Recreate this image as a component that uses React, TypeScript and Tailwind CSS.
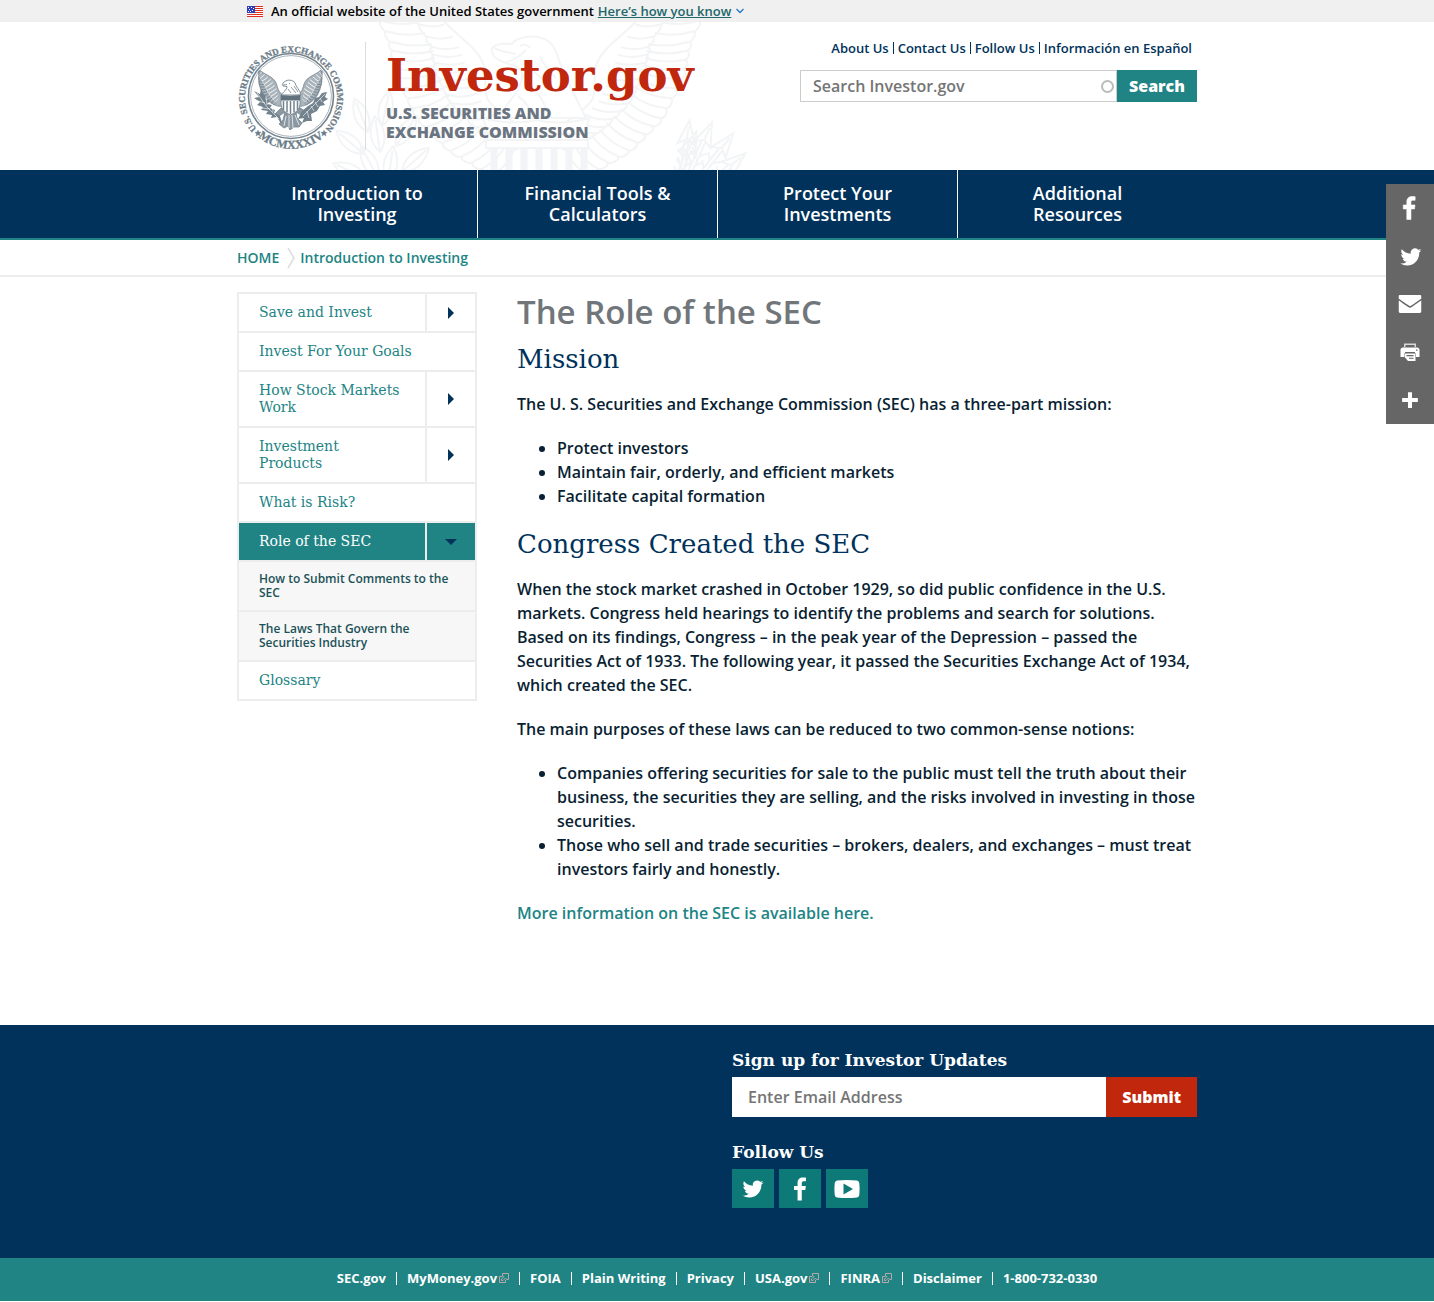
import type { ReactNode } from "react";

type Pt = [number, number];

/** Point on a poly-line of control points, t in 0..1. */
function along(points: Pt[], t: number): Pt {
  const s = t * (points.length - 1);
  const i = Math.min(Math.floor(s), points.length - 2);
  const f = s - i;
  return [
    points[i][0] + (points[i + 1][0] - points[i][0]) * f,
    points[i][1] + (points[i + 1][1] - points[i][1]) * f,
  ];
}

/** Rounded feathers running from a root curve to a tip curve. */
function feathers(root: Pt[], tip: Pt[], count: number, bend: number): string {
  let d = "";
  for (let i = 0; i < count; i++) {
    const a = along(root, i / count);
    const b = along(root, (i + 1) / count);
    const p = along(tip, i / count);
    const q = along(tip, (i + 1) / count);
    const dx = p[0] - a[0];
    const dy = p[1] - a[1];
    const len = Math.hypot(dx, dy) || 1;
    const ox = (-dy / len) * bend;
    const oy = (dx / len) * bend;
    const ex = (dx / len) * bend;
    const ey = (dy / len) * bend;
    d += `M${a[0]} ${a[1]}Q${(a[0] + p[0]) / 2 + ox} ${(a[1] + p[1]) / 2 + oy} ${p[0]} ${p[1]}`;
    d += `C${p[0] + ex} ${p[1] + ey} ${q[0] + ex} ${q[1] + ey} ${q[0]} ${q[1]}`;
    d += `Q${(b[0] + q[0]) / 2 + ox} ${(b[1] + q[1]) / 2 + oy} ${b[0]} ${b[1]}`;
  }
  return d;
}

const bigRoot: Pt[] = [[322, -22], [292, 22], [282, 50], [270, 78], [246, 102], [222, 118]];
const bigMid: Pt[] = [[345, -22], [318, 22], [312, 50], [298, 80], [270, 108], [236, 128]];
const bigTip: Pt[] = [[378, -22], [358, 20], [350, 56], [330, 96], [298, 128], [256, 152]];

const leaf = "M0 0C-9 -10 -9 -24 0 -36C9 -24 9 -10 0 0ZM0 -2V-32";
const leaves: [number, number, number][] = [
  [38, 110, -22], [52, 104, 12], [34, 132, -50], [66, 124, 34], [50, 130, -8],
  [36, 156, -66], [72, 150, 48], [48, 156, -28], [58, 160, 8],
];
const arrows: [number, number, number][] = [
  [360, 150, 24], [352, 152, 8], [370, 154, 38], [346, 160, 22], [374, 166, 50],
];

function HeaderWatermark() {
  return (
    <svg
      aria-hidden="true"
      viewBox="0 0 420 148"
      className="pointer-events-none absolute top-0 left-[93px] h-[148px] w-[420px] overflow-hidden"
      fill="none"
      stroke="#f3f4f6"
      strokeWidth="2"
    >
      {["", "matrix(-1 0 0 1 420 0)"].map((t) => (
        <g key={t} transform={t || undefined}>
          <path d={feathers(bigMid, bigTip, 20, 5)} />
          <path d={feathers(bigRoot, bigMid, 18, 4)} />
          <path d="M312 -8C300 10 272 24 266 44C262 58 268 66 262 78C256 88 240 96 226 108" />
        </g>
      ))}
      <path fill="#fff" d="M178 42C168 38 160 34 162 26C168 20 176 22 182 22C188 14 206 12 216 18C228 24 228 40 234 52C242 68 250 84 256 96H168C176 82 190 70 192 56C194 46 186 44 178 42Z" />
      <path d="M164 26C172 30 178 30 186 32M176 40C184 38 190 34 196 28M190 24C194 22 198 23 200 26" />
      <path d="M200 46C210 56 218 60 226 70M196 60C206 68 212 76 216 86M188 74C196 80 200 86 202 94M210 34C214 44 220 50 226 56" />
      <path fill="#fff" d="M156 122Q158 102 152 96Q182 104 206 98Q232 104 260 96Q254 104 258 122V126H156Z" />
      <path d="M157 112H257M157 118H257" />
      <path stroke="#f3f4f7" strokeWidth="7" d="M164 127V150M179 127V150M194 127V150M209 127V150M224 127V150M239 127V150M254 127V150" />
      {leaves.map(([x, y, r]) => (
        <path key={`${x}-${y}`} d={leaf} transform={`translate(${x} ${y}) rotate(${r})`} />
      ))}
      {arrows.map(([x, y, r]) => (
        <path
          key={`${x}-${y}`}
          transform={`translate(${x} ${y}) rotate(${r})`}
          d="M-2 0V-34L-9 -30L0 -54L9 -30L2 -34V0M0 -34V-48M-2 -8L-8 -14M2 -8L8 -14M-2 -18L-8 -24M2 -18L8 -24"
        />
      ))}
    </svg>
  );
}

const sealRoot: Pt[] = [[84, 29], [74, 37], [68, 47], [66, 58]];
const sealMid: Pt[] = [[87, 32], [81, 42], [76, 52], [69, 61]];
const sealTip: Pt[] = [[87, 28], [86, 42], [81, 54], [70, 64]];

function Seal() {
  return (
    <svg
      role="img"
      aria-label="Seal of the U.S. Securities and Exchange Commission"
      viewBox="0 0 108 108"
      className="size-[108px] shrink-0"
      fill="none"
      stroke="#73838e"
    >
      <defs>
        <path id="seal-top" d="M19 86A46 46 0 1 1 89 86" />
        <path id="seal-bottom" d="M14 88A52 52 0 0 0 94 88" />
      </defs>
      <circle cx="54" cy="54" r="42.5" strokeWidth="1.6" />
      <circle cx="54" cy="54" r="40.4" strokeWidth="0.6" />
      <g fill="#6b7c88" stroke="#6b7c88" strokeWidth="0.3" fontFamily="Liberation Serif, serif">
        <text textAnchor="middle" fontSize="9">
          <textPath href="#seal-top" startOffset="50%">U.S. SECURITIES AND EXCHANGE COMMISSION</textPath>
        </text>
        <text fontSize="12" textAnchor="middle">
          <textPath href="#seal-bottom" startOffset="50%">MCMXXXIV</textPath>
        </text>
        <path d="M21 88l.9 2.100 2.300.2-1.700 1.500.5 2.200-2-1.200-2 1.200.5-2.200-1.700-1.500 2.300-.2zM87 88l.9 2.100 2.300.2-1.700 1.500.5 2.200-2-1.200-2 1.200.5-2.200-1.700-1.500 2.300-.2z" />
      </g>
      <g transform="translate(4 3) scale(0.93)">
        {["", "matrix(-1 0 0 1 106 0)"].map((t) => (
          <g key={t} transform={t || undefined}>
            <path
              fill="#aab4bb"
              strokeWidth="0.8"
              d="M86 27C82 31 74 33 70 38C66 43 68 48 62 53L60 66C70 67 80 60 84 50C87 42 88 34 86 27Z"
            />
            <path strokeWidth="0.7" d={feathers(sealMid, sealTip, 12, 1)} />
            <path stroke="#fff" strokeWidth="0.6" d={feathers(sealRoot, sealMid, 9, 0.5)} />
          </g>
        ))}
      </g>
      <path fill="#fff" strokeWidth="0.9" d="M46 44C45 42 46 40 48 39.500C50 37.500 56 37.500 58 41C59 45 63 48 64 53H44C46 50 50 48 50 44.500Z" />
      <path strokeWidth="0.8" d="M46 43L50 42.500M52 41.500H53M51 47L54 51M54 45L59 51M57 44L61 50" />
      <path fill="#8b98a2" strokeWidth="0.8" d="M44 66L38 72L42 74L48 70L46 78L42 82L47 86L51 84L53 88L57 85L62 85L65 81L60 76L59 70L66 74L69 70L62 65Z" />
      <path stroke="#fff" strokeWidth="0.7" d="M49 74L47 84M52 73V86M55 73L56 86M58 73L62 83" />
      <path fill="#fff" strokeWidth="0.8" d="M44 53Q53 55 63 53V62Q63 69 53.500 73Q44 69 44 62Z" />
      <path fill="#5f717d" stroke="none" d="M44 53Q53 55 63 53V58.500H44Z" />
      <path strokeWidth="1.500" d="M46.500 59V68M50 59V70.500M53.500 59V72M57 59V70.500M60.500 59V68" />
      <path fill="#73838e" stroke="none" d="M17 49l6 3 1-5 3 6 3 1-2 3 5 2-3 3 5 1-2 3 5 2-1 3 6 3 2 7-2-1-3-5-6 1 1-3-6-1 2-3-7-1 2-3-6-2 3-3-6-4 5-1z" />
      <path stroke="#fff" strokeWidth="0.6" d="M20 51L30 65L42 77M21 59L28 61M25 66L33 67M29 54L30 63M35 62L36 70" />
      <path fill="#73838e" stroke="none" d="M90 50l-5 1-3 4-4 1-2 5-5 3-6 5-4 8 6-1-2 5 5-2 5 0-1-7 6-3 3-5 5-1-2-3 5-3-3-2z" />
      <path stroke="#fff" strokeWidth="0.6" d="M88 52L66 74M83 56L85 60M78 60L81 65M74 64L77 69M70 69L72 76" />
    </svg>
  );
}

function Flag() {
  return (
    <svg viewBox="0 0 16 11" className="h-[11px] w-4 shrink-0" role="img" aria-label="U.S. flag" shapeRendering="crispEdges">
      <path fill="#fff" d="M0 0H16V11H0z" />
      <path fill="#e02f1c" d="M0 0H16V1H0zM0 2H16V3H0zM0 4H16V5H0zM0 6H16V7H0zM0 8H16V9H0zM0 10H16V11H0z" />
      <path fill="#2a3fc0" d="M0 0H8V7H0z" />
      <path fill="#fff" d="M1 1h1v1h-1zM4 1h1v1h-1zM6 2h1v1h-1zM2 3h1v1h-1zM5 4h1v1h-1zM1 5h1v1h-1zM3 5h1v1h-1z" />
    </svg>
  );
}

const twitterPath =
  "M28 8.557a9.913 9.913 0 0 1-2.828.775 4.93 4.93 0 0 0 2.166-2.725 9.738 9.738 0 0 1-3.13 1.194 4.92 4.92 0 0 0-3.593-1.55 4.924 4.924 0 0 0-4.794 6.049c-4.09-.21-7.72-2.17-10.15-5.15a4.942 4.942 0 0 0-.665 2.477c0 1.71.87 3.214 2.19 4.1a4.968 4.968 0 0 1-2.23-.616v.06c0 2.39 1.7 4.38 3.952 4.83-.414.115-.85.174-1.297.174-.318 0-.626-.03-.928-.086a4.935 4.935 0 0 0 4.6 3.42 9.893 9.893 0 0 1-6.114 2.107c-.398 0-.79-.023-1.175-.068a13.953 13.953 0 0 0 7.55 2.213c9.056 0 14.01-7.507 14.01-14.013 0-.213-.005-.426-.015-.637.96-.695 1.795-1.56 2.455-2.55z";
const facebookPath =
  "M17.78 27.5V17.008h3.522l.527-4.09h-4.05v-2.61c0-1.182.33-1.99 2.023-1.99h2.166V4.66c-.375-.05-1.66-.16-3.155-.16-3.123 0-5.26 1.905-5.26 5.405v3.016h-3.53v4.09h3.53V27.5h4.223z";

function Icon({ className, children }: { className: string; children: ReactNode }) {
  return (
    <svg viewBox="0 0 32 32" className={className} fill="#fff" aria-hidden="true">
      {children}
    </svg>
  );
}

const shares: { label: string; icon: ReactNode }[] = [
  { label: "Share on Facebook", icon: <Icon className="size-8"><path d={facebookPath} stroke="#fff" strokeWidth="0.5" transform="translate(-0.8 0)" /></Icon> },
  { label: "Share on Twitter", icon: <Icon className="size-7"><path d={twitterPath} transform="translate(1 1)" /></Icon> },
  {
    label: "Share by email",
    icon: (
      <Icon className="size-9">
        <path
          transform="translate(0 0.700)"
          d="M26 21.25v-9s-9.1 6.35-9.984 6.68C15.144 18.616 6 12.25 6 12.25v9c0 1.25.266 2 1.5 2h17c1.266 0 1.5-.72 1.5-2zm-.015-12.765c0-.91-.265-1.235-1.485-1.235h-17c-1.255 0-1.5.39-1.5 1.3l.015 2.14s9.035 6.22 10 6.56c1.02-.395 9.985-6.7 9.985-6.7z"
        />
      </Icon>
    ),
  },
  {
    label: "Print",
    icon: (
      <Icon className="size-8">
        <path d="M10 7.500H22V11H10z" opacity=".75" />
        <path d="M11.500 9H20.500V11H11.500z" fill="#666" />
        <path d="M9 11.500H23C24.500 11.500 25.500 12.500 25.500 14V21H22V17H10V21H6.500V14C6.500 12.500 7.500 11.500 9 11.500z" />
        <path d="M10.500 16.500H21.500V25H14L10.500 21z" />
        <path d="M11 16H21V17.500H11zM12.500 19H19.500V20.300H12.500zM15 21.800H19.500V22.800H15z" fill="#666" />
        <path d="M22 13.500h1.500v1.200H22z" fill="#666" />
      </Icon>
    ),
  },
  { label: "More sharing options", icon: <Icon className="size-7"><path d="M13.700 7h4.600v18h-4.600z M7 13.700h18v4.600H7z" /></Icon> },
];

const mainNav: [string, string][] = [
  ["Introduction to", "Investing"],
  ["Financial Tools &", "Calculators"],
  ["Protect Your", "Investments"],
  ["Additional", "Resources"],
];

const sideNav: { label: string; toggle?: boolean; active?: boolean; children?: string[] }[] = [
  { label: "Save and Invest", toggle: true },
  { label: "Invest For Your Goals" },
  { label: "How Stock Markets Work", toggle: true },
  { label: "Investment Products", toggle: true },
  { label: "What is Risk?" },
  {
    label: "Role of the SEC",
    toggle: true,
    active: true,
    children: ["How to Submit Comments to the SEC", "The Laws That Govern the Securities Industry"],
  },
  { label: "Glossary" },
];

const footerLinks: { label: string; external?: boolean }[] = [
  { label: "SEC.gov" },
  { label: "MyMoney.gov", external: true },
  { label: "FOIA" },
  { label: "Plain Writing" },
  { label: "Privacy" },
  { label: "USA.gov", external: true },
  { label: "FINRA", external: true },
  { label: "Disclaimer" },
  { label: "1-800-732-0330" },
];

function SideNav() {
  return (
    <nav aria-label="Section" className="w-60 shrink-0 self-start border-2 border-b-0 border-[#ededed]">
      <ul>
        {sideNav.map((item) => (
          <li key={item.label}>
            <div className={item.active ? "flex border-b-2 border-[#ededed] bg-[#218484]" : "flex border-b-2 border-[#ededed]"}>
              <a
                href="#"
                className={
                  item.active
                    ? "flex-1 px-5 py-[10px] font-['DejaVu_Serif',serif] text-sm leading-[17px] font-normal text-white"
                    : "flex-1 px-5 py-[10px] font-['DejaVu_Serif',serif] text-sm leading-[17px] font-normal text-[#218484]"
                }
              >
                {item.label}
              </a>
              {item.toggle && (
                <button
                  type="button"
                  aria-label={`Toggle ${item.label}`}
                  className="flex w-[50px] items-center justify-center border-l-2 border-[#ededed]"
                >
                  <svg viewBox="0 0 12 12" className="size-3" fill="#00325b" aria-hidden="true">
                    {item.active ? <path d="M0 3H12L6 9z" /> : <path d="M3 0V12L9 6z" />}
                  </svg>
                </button>
              )}
            </div>
            {item.children && (
              <ul>
                {item.children.map((c) => (
                  <li key={c} className="border-b-2 border-[#ededed] bg-[#f7f7f7]">
                    <a href="#" className="block px-5 py-[10px] text-xs leading-[14px] text-[#1b5257]">
                      {c}
                    </a>
                  </li>
                ))}
              </ul>
            )}
          </li>
        ))}
      </ul>
    </nav>
  );
}

export default function App() {
  return (
    <div className="relative bg-white font-['Open_Sans',sans-serif] text-base leading-6 font-semibold text-[#0a1f33]">
      <div className="bg-[#f0f0f0]">
        <div className="mx-auto flex h-[22px] max-w-[960px] items-center px-[10px] text-[13px] leading-[22px] text-black">
          <Flag />
          <span className="ml-2">An official website of the United States government</span>
          <button type="button" className="ml-1 flex items-center gap-1 text-[#22676b]">
            <span className="underline">Here’s how you know</span>
            <svg viewBox="0 0 10 6" className="h-[6px] w-[10px]" fill="none" stroke="#2378c3" strokeWidth="1.300" aria-hidden="true">
              <path d="M1.500 1L5 4.500L8.500 1" />
            </svg>
          </button>
        </div>
      </div>

      <header className="mx-auto max-w-[960px]">
        <div className="relative flex h-[148px] justify-between">
          <HeaderWatermark />
          <a href="#" className="relative flex items-start pt-5">
            <Seal />
            <span className="ml-5 h-[108px] w-px bg-[#dcdcdc]" />
            <span className="ml-5 flex flex-col pt-[6px]">
              <span className="font-['DejaVu_Serif',serif] text-[45px] leading-[56px] font-bold text-[#c1270d]">Investor.gov</span>
              <span className="text-base leading-[19px] font-extrabold text-[#6b7581]">
                U.S. SECURITIES AND
                <br />
                EXCHANGE COMMISSION
              </span>
            </span>
          </a>
          <div className="relative w-[397px] pt-[18px]">
            <ul className="flex justify-end pr-[5px] text-[13px] leading-4 whitespace-nowrap text-[#00325b]">
              {["About Us", "Contact Us", "Follow Us", "Información en Español"].map((l, i) => (
                <li key={l} className="flex items-center">
                  {i > 0 && <span className="mx-1 h-3 w-px bg-[#00325b]" />}
                  <a href="#">{l}</a>
                </li>
              ))}
            </ul>
            <form className="mt-[14px] flex h-8" onSubmit={(e) => e.preventDefault()}>
              <div className="relative min-w-0 flex-1">
                <input
                  type="text"
                  aria-label="Search Investor.gov"
                  placeholder="Search Investor.gov"
                  className="h-full w-full border border-[#ccc] bg-white px-3 outline-none placeholder:text-[#757575]"
                />
                <span className="absolute top-[10px] right-[3px] size-[13px] rounded-full border-2 border-[#bbb]" />
              </div>
              <button type="submit" className="w-20 bg-[#218484] font-extrabold text-white">
                Search
              </button>
            </form>
          </div>
        </div>
      </header>

      <nav aria-label="Main" className="border-b-2 border-[#218484] bg-[#00325b]">
        <ul className="mx-auto grid max-w-[960px] grid-cols-4">
          {mainNav.map(([a, b], i) => (
            <li key={a} className={i > 0 ? "border-l border-white" : ""}>
              <a href="#" className="block py-[13px] text-center text-lg leading-[21px] text-white">
                {a}
                <br />
                {b}
              </a>
            </li>
          ))}
        </ul>
      </nav>

      <nav aria-label="Breadcrumb" className="border-b-2 border-[#ededed]">
        <ol className="mx-auto flex h-[35px] max-w-[960px] items-center text-sm text-[#218484]">
          <li>
            <a href="#">HOME</a>
          </li>
          <li className="flex items-center">
            <svg viewBox="0 0 8 22" className="mr-[5px] ml-2 h-[22px] w-2" fill="none" stroke="#ddd" strokeWidth="1.500" aria-hidden="true">
              <path d="M1 1L7 11L1 21" />
            </svg>
            <a href="#">Introduction to Investing</a>
          </li>
        </ol>
      </nav>

      <div className="mx-auto flex max-w-[960px] gap-10 pt-[15px] pb-[100px]">
        <SideNav />
        <main className="min-w-0 flex-1">
          <h1 className="mb-[11px] text-[33px] leading-10 text-[#71767a]">The Role of the SEC</h1>
          <h2 className="mb-4 font-['DejaVu_Serif',serif] text-[26px] leading-[33px] font-normal text-[#00325b]">Mission</h2>
          <p className="mb-5">The U. S. Securities and Exchange Commission (SEC) has a three-part mission:</p>
          <ul className="mb-5 list-disc pl-10">
            <li>Protect investors</li>
            <li>Maintain fair, orderly, and efficient markets</li>
            <li>Facilitate capital formation</li>
          </ul>
          <h2 className="mb-4 font-['DejaVu_Serif',serif] text-[26px] leading-[33px] font-normal text-[#00325b]">
            Congress Created the SEC
          </h2>
          <p className="mb-5">
            When the stock market crashed in October 1929, so did public confidence in the U.S. markets. Congress held
            hearings to identify the problems and search for solutions. Based on its findings, Congress – in the peak year
            of the Depression – passed the Securities Act of 1933. The following year, it passed the Securities Exchange
            Act of 1934, which created the SEC.
          </p>
          <p className="mb-5">The main purposes of these laws can be reduced to two common-sense notions:</p>
          <ul className="mb-5 list-disc pl-10">
            <li>
              Companies offering securities for sale to the public must tell the truth about their business, the
              securities they are selling, and the risks involved in investing in those securities.
            </li>
            <li>
              Those who sell and trade securities – brokers, dealers, and exchanges – must treat investors fairly and
              honestly.
            </li>
          </ul>
          <p>
            <a href="#" className="text-[#218484]">
              More information on the SEC is available here.
            </a>
          </p>
        </main>
      </div>

      <footer>
        <div className="bg-[#00325b]">
          <div className="mx-auto flex max-w-[960px] justify-end pt-5 pb-[50px] text-white">
            <div className="w-[465px]">
              <label htmlFor="email" className="block pb-[2px] font-['DejaVu_Serif',serif] text-[17px] leading-[30px] font-bold">
                Sign up for Investor Updates
              </label>
              <form className="flex h-10" onSubmit={(e) => e.preventDefault()}>
                <input
                  id="email"
                  type="email"
                  placeholder="Enter Email Address"
                  className="min-w-0 flex-1 bg-white px-4 text-black outline-none placeholder:text-[#757575]"
                />
                <button type="submit" className="bg-[#c1270d] px-4 font-extrabold">
                  Submit
                </button>
              </form>
              <h3 className="mt-5 pb-[2px] font-['DejaVu_Serif',serif] text-[17px] leading-[30px] font-bold">Follow Us</h3>
              <div className="flex gap-[5px]">
                <a href="#" aria-label="Twitter" className="flex h-[39px] w-[42px] items-center justify-center bg-[#0e7a78]">
                  <Icon className="size-7"><path d={twitterPath} /></Icon>
                </a>
                <a href="#" aria-label="Facebook" className="flex h-[39px] w-[42px] items-center justify-center bg-[#0e7a78]">
                  <Icon className="size-8"><path d={facebookPath} /></Icon>
                </a>
                <a href="#" aria-label="YouTube" className="flex h-[39px] w-[42px] items-center justify-center bg-[#0e7a78]">
                  <svg viewBox="0 0 26 20" className="h-5 w-[26px]" fill="#fff" aria-hidden="true">
                    <path fillRule="evenodd" d="M3 1.500Q13 .3 23 1.500Q25 2 25.300 4Q25.900 10 25.300 16Q25 18 23 18.500Q13 19.700 3 18.500Q1 18 .7 16Q.1 10 .7 4Q1 2 3 1.500ZM9.500 4.500V15.500L19 10Z" />
                  </svg>
                </a>
              </div>
            </div>
          </div>
        </div>
        <div className="bg-[#218484]">
          <ul className="mx-auto flex max-w-[960px] items-center justify-center pt-3 pb-[15px] text-[13px] leading-4 font-bold whitespace-nowrap text-white">
            {footerLinks.map((l, i) => (
              <li key={l.label} className="flex items-center">
                {i > 0 && <span className="mx-[10px] h-[13px] w-px bg-white" />}
                <a href="#" className="flex items-center">
                  {l.label}
                  {l.external && (
                    <svg viewBox="0 0 10 10" className="ml-[2px] size-[10px]" fill="none" stroke="#b5a9a9" aria-hidden="true">
                      <path d="M3 3.500H.5V9.500H6.500V7M3.500 .5H9.500V6.500H7.500M3.500 .5V3L5 3.500L2.500 6V7.500H4L6.500 5L7.500 6.500" />
                    </svg>
                  )}
                </a>
              </li>
            ))}
          </ul>
        </div>
      </footer>

      <div className="fixed top-[184px] right-0 flex w-12 flex-col bg-[#666]">
        {shares.map((s) => (
          <a key={s.label} href="#" aria-label={s.label} className="flex h-12 items-center justify-center">
            {s.icon}
          </a>
        ))}
      </div>
    </div>
  );
}
